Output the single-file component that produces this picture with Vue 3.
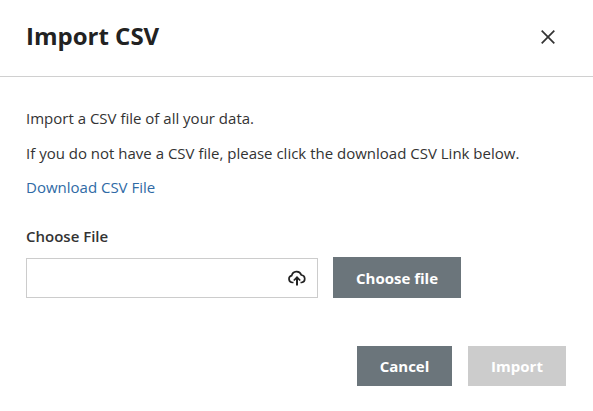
<template>
  <div class="modal">
    <header class="head">
      <h1>Import CSV</h1>
      <button class="close" aria-label="Close">
        <svg width="14" height="14" viewBox="0 0 14 14"><path d="M.7.7l12.600 12.600M13.300.7L.7 13.300" stroke="#333" stroke-width="1.700" fill="none" /></svg>
      </button>
    </header>
    <div class="body">
      <p>Import a CSV file of all your data.</p>
      <p class="last">If you do not have a CSV file, please click the download CSV Link below.</p>
      <a class="link">Download CSV File</a>
      <label>Choose File</label>
      <div class="file-row">
        <div class="input">
          <svg width="18" height="16" viewBox="0 0 18 16" fill="none" stroke="#222" stroke-width="1.700"><path d="M5.500 12.500H4.500A3.500 3.500 0 0 1 3.700 5.600 5 5 0 0 1 13.300 5a3.800 3.800 0 0 1 .4 7.500H12.500" /><path d="M9 15.500V7.500" stroke-width="2" /><path d="M5.800 10.500L9 7.300l3.200 3.200" /></svg>
        </div>
        <button class="btn">Choose file</button>
      </div>
    </div>
    <footer class="foot">
      <button class="btn cancel">Cancel</button>
      <button class="btn off">Import</button>
    </footer>
  </div>
</template>

<script setup>
</script>

<style>
body { background: #fff; }
</style>

<style scoped>
.modal {
  width: 593px;
  height: 411px;
  font-family: "Open Sans", sans-serif;
  color: #333;
  display: flex;
  flex-direction: column;
}
.head {
  height: 77px;
  box-sizing: border-box;
  border-bottom: 1px solid #d0d0d0;
  display: flex;
  align-items: center;
  justify-content: space-between;
  padding: 0 38px 5px 26px;
}
h1 {
  margin: 0;
  font-size: 24px;
  font-weight: 700;
  color: #222;
}
.close {
  border: 0;
  background: none;
  padding: 0;
  margin-top: 2px;
  display: flex;
}
.body {
  padding: 31px 26px 0;
  font-size: 15px;
  display: flex;
  flex-direction: column;
}
p { margin: 0 0 15px; line-height: 20px; }
p.last { margin-bottom: 14px; }
.link { color: #2f6aa5; line-height: 20px; }
label { margin-top: 29px; font-weight: 600; line-height: 20px; }
.file-row {
  display: flex;
  gap: 15px;
  margin-top: 11px;
  align-items: flex-end;
}
.input {
  width: 292px;
  height: 40px;
  box-sizing: border-box;
  border: 1px solid #ccc;
  display: flex;
  align-items: center;
  justify-content: flex-end;
  padding-right: 11px;
}
.btn {
  border: 0;
  height: 41px;
  width: 128px;
  background: #6b757b;
  color: #fff;
  font: 700 15px "Open Sans", sans-serif;
}
.foot {
  display: flex;
  justify-content: flex-end;
  gap: 16px;
  padding: 48px 27px 0;
}
.cancel { width: 95px; height: 40px; }
.off { width: 98px; height: 40px; background: #cccccc; }
</style>
